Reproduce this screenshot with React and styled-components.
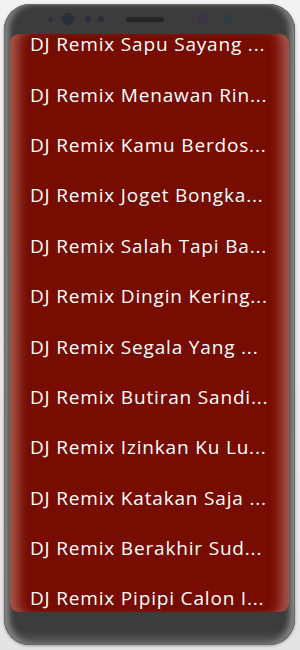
import React from "react";
import styled, { createGlobalStyle } from "styled-components";

const Global = createGlobalStyle`
  html, body { margin: 0; padding: 0; }
  body {
    width: 300px;
    height: 650px;
    overflow: hidden;
    background: linear-gradient(180deg, #f2f2f2 0%, #e4e4e4 100%);
    font-family: "Open Sans", "Noto Sans", sans-serif;
  }
`;

const Page = styled.div`
  width: 300px;
  height: 650px;
  padding: 4px 5px 5px 4px;
  box-sizing: border-box;
`;

const Phone = styled.div`
  width: 291px;
  height: 641px;
  box-sizing: border-box;
  border-radius: 26px;
  background: #3c3c3c;
  box-shadow: inset 0 0 0 1px #6a6a6a, inset 7px 0 6px -2px #8a8a8a,
    inset -7px 0 6px -2px #8a8a8a, inset 0 -8px 10px -2px #666,
    0 1px 3px rgba(0, 0, 0, 0.35);
  padding: 0 6px 33px 6px;
  display: flex;
  flex-direction: column;
`;

const Bezel = styled.div`
  height: 30px;
  flex: none;
  display: flex;
  align-items: center;
  padding-left: 38px;
`;

const Dot = styled.span`
  flex: none;
  width: ${(p) => p.size}px;
  height: ${(p) => p.size}px;
  border-radius: 50%;
  background: ${(p) => p.color};
  margin-left: ${(p) => p.gap}px;
`;

const Speaker = styled.span`
  flex: none;
  width: 38px;
  height: 5px;
  border-radius: 3px;
  background: #262626;
  margin-left: ${(p) => p.gap}px;
`;

const Screen = styled.div`
  flex: 1;
  border-radius: 9px;
  overflow: hidden;
  background: #760c02;
  box-shadow: inset 16px 0 12px -8px rgba(200, 140, 130, 0.6),
    inset -16px 0 12px -8px rgba(200, 140, 130, 0.6);
`;

const List = styled.ul`
  list-style: none;
  margin: -15px 0 0 0;
  padding: 0;
`;

const Row = styled.li`
  height: 50.4px;
  display: flex;
  align-items: center;
  padding-left: 20px;
  color: #ffffff;
  font-size: 19px;
  white-space: nowrap;
  letter-spacing: 0.82px;
`;

const songs = [
  "DJ Remix Sapu Sayang ...",
  "DJ Remix Menawan Rin...",
  "DJ Remix Kamu Berdos...",
  "DJ Remix Joget Bongka...",
  "DJ Remix Salah Tapi Ba...",
  "DJ Remix Dingin Kering...",
  "DJ Remix Segala Yang ...",
  "DJ Remix Butiran Sandi...",
  "DJ Remix Izinkan Ku Lu...",
  "DJ Remix Katakan Saja ...",
  "DJ Remix Berakhir Sud...",
  "DJ Remix Pipipi Calon I...",
];

export default function App() {
  return (
    <Page>
      <Global />
      <Phone>
        <Bezel>
          <Dot size={5} color="#2e3038" gap={0} />
          <Dot size={12} color="#2a2e38" gap={9} />
          <Dot size={6} color="#2c2f3a" gap={11} />
          <Dot size={6} color="#2c2f3a" gap={7} />
          <Speaker gap={22} />
          <Dot size={12} color="#3a3444" gap={33} />
          <Dot size={8} color="#2c3e44" gap={15} />
        </Bezel>
        <Screen>
          <List>
            {songs.map((s) => (
              <Row key={s}>{s}</Row>
            ))}
          </List>
        </Screen>
      </Phone>
    </Page>
  );
}
